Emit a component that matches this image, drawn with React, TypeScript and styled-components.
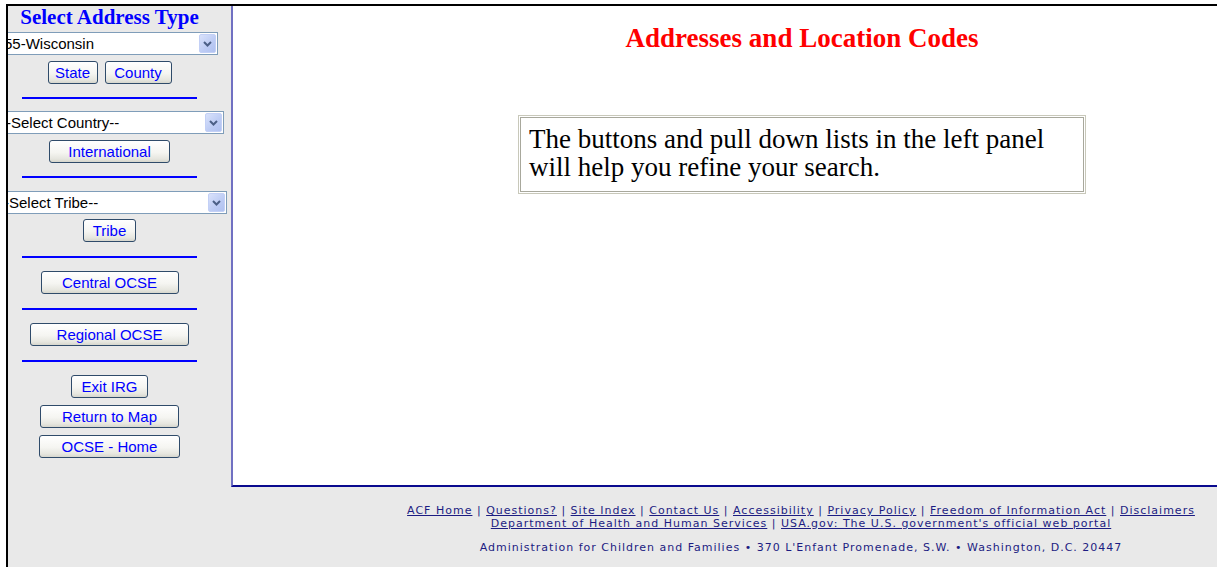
import React from 'react';
import styled, { createGlobalStyle } from 'styled-components';

const GlobalStyle = createGlobalStyle`
  html, body {
    margin: 0;
    padding: 0;
    background: #fff;
    overflow: hidden;
  }
`;

const footerLinks = [
  'ACF Home',
  'Questions?',
  'Site Index',
  'Contact Us',
  'Accessibility',
  'Privacy Policy',
  'Freedom of Information Act',
  'Disclaimers',
];

const Dropdown = ({
  value,
  width,
  shift,
  top,
}: {
  value: string;
  width: number;
  shift: number;
  top: number;
}) => (
  <SelectBox $width={width} $shift={shift} $top={top}>
    <NativeSelect defaultValue={value}>
      <option>{value}</option>
    </NativeSelect>
    <ArrowButton>
      <svg width="9" height="6" viewBox="0 0 9 6">
        <path d="M1 1l3.5 3.5L8 1" fill="none" stroke="#4b5f86" strokeWidth="2" />
      </svg>
    </ArrowButton>
  </SelectBox>
);

const App = () => {
  return (
    <>
      <GlobalStyle />
      <Page>
        <Sidebar>
          <Title>Select Address Type</Title>
          <Dropdown value="55-Wisconsin" width={216} shift={-6} top={4} />
          <ButtonRow $top={6}>
            <PanelButton $width={50}>State</PanelButton>
            <PanelButton $width={67}>County</PanelButton>
          </ButtonRow>
          <Divider $top={13} />
          <Dropdown value="--Select Country--" width={225} shift={-9} top={12} />
          <PanelButton $width={121} $top={6}>
            International
          </PanelButton>
          <Divider $top={13} />
          <Dropdown value="--Select Tribe--" width={230} shift={-11} top={13} />
          <PanelButton $width={53} $top={5}>
            Tribe
          </PanelButton>
          <Divider $top={14} />
          <PanelButton $width={138} $top={13}>
            Central OCSE
          </PanelButton>
          <Divider $top={14} />
          <PanelButton $width={159} $top={13}>
            Regional OCSE
          </PanelButton>
          <Divider $top={14} />
          <PanelButton $width={77} $top={13}>
            Exit IRG
          </PanelButton>
          <PanelButton $width={139} $top={7}>
            Return to Map
          </PanelButton>
          <PanelButton $width={141} $top={7}>
            OCSE - Home
          </PanelButton>
        </Sidebar>
        <Main>
          <Frame>
            <Heading>Addresses and Location Codes</Heading>
            <Note>
              <NoteText>
                The buttons and pull down lists in the left panel will help you
                refine your search.
              </NoteText>
            </Note>
          </Frame>
          <Footer>
            <FooterLine>
              {footerLinks.map((label, i) => (
                <React.Fragment key={label}>
                  {i > 0 && ' | '}
                  <FooterLink href="#">{label}</FooterLink>
                </React.Fragment>
              ))}
            </FooterLine>
            <FooterLine>
              <FooterLink href="#">Department of Health and Human Services</FooterLink>
              {' | '}
              <FooterLink href="#">
                USA.gov: The U.S. government's official web portal
              </FooterLink>
            </FooterLine>
            <Address>
              Administration for Children and Families • 370 L'Enfant Promenade,
              S.W. • Washington, D.C. 20447
            </Address>
          </Footer>
        </Main>
      </Page>
    </>
  );
};

export default App;

const Page = styled.div`
  display: flex;
  height: 563px;
  margin: 4px 0 0 6px;
  border-top: 2px solid #000;
  border-left: 2px solid #000;
  background: #e9e9e9;
  overflow: hidden;
`;

const Sidebar = styled.div`
  display: flex;
  flex-direction: column;
  align-items: center;
  flex: 0 0 223px;
  box-sizing: border-box;
  padding-right: 20px;
  overflow: hidden;
`;

const Title = styled.div`
  font: bold 21px/22px 'Liberation Serif', 'Times New Roman', serif;
  color: #0000ff;
  white-space: nowrap;
`;

const SelectBox = styled.div<{ $width: number; $shift: number; $top: number }>`
  display: flex;
  align-items: center;
  align-self: flex-start;
  flex-shrink: 0;
  box-sizing: border-box;
  width: ${({ $width }) => $width}px;
  height: 23px;
  margin-top: ${({ $top }) => $top}px;
  margin-left: ${({ $shift }) => $shift}px;
  border: 1px solid #7f9db9;
  background: #fff;
`;

const NativeSelect = styled.select`
  flex: 1;
  min-width: 0;
  height: 100%;
  padding: 0 0 0 1px;
  border: none;
  outline: none;
  background: transparent;
  appearance: none;
  font: 15px 'Liberation Sans', Arial, sans-serif;
  color: #000;
`;

const ArrowButton = styled.span`
  display: flex;
  align-items: center;
  justify-content: center;
  flex: 0 0 17px;
  height: 19px;
  margin-right: 1px;
  box-sizing: border-box;
  border: 1px solid #c3d0f6;
  border-radius: 2px;
  background: linear-gradient(135deg, #d9e2fb 0%, #bccbf4 60%, #b0c1f0 100%);
`;

const ButtonRow = styled.div<{ $top: number }>`
  display: flex;
  gap: 7px;
  margin-top: ${({ $top }) => $top}px;
`;

const PanelButton = styled.button<{ $width: number; $top?: number }>`
  flex-shrink: 0;
  box-sizing: border-box;
  width: ${({ $width }) => $width}px;
  height: 23px;
  margin-top: ${({ $top = 0 }) => $top}px;
  padding: 0;
  border: 1px solid #2f4b6a;
  border-radius: 3px;
  background: linear-gradient(#ffffff 0%, #f5f5f1 55%, #e6e6df 85%, #d6d6cd 100%);
  font: 15px 'Liberation Sans', Arial, sans-serif;
  color: #0000ff;
  white-space: nowrap;
  cursor: pointer;
`;

const Divider = styled.div<{ $top: number }>`
  flex-shrink: 0;
  width: 175px;
  height: 2px;
  margin-top: ${({ $top }) => $top}px;
  background: #0000ff;
`;

const Main = styled.div`
  display: flex;
  flex-direction: column;
  flex: 0 0 1140px;
`;

const Frame = styled.div`
  display: flex;
  flex-direction: column;
  align-items: center;
  box-sizing: border-box;
  height: 481px;
  border-left: 2px solid #7070c2;
  border-bottom: 2px solid #0a0a8e;
  background: #fff;
`;

const Heading = styled.h1`
  margin: 17px 0 0;
  font: bold 27px/31px 'Liberation Serif', 'Times New Roman', serif;
  color: #ff0000;
`;

const Note = styled.div`
  box-sizing: border-box;
  width: 568px;
  margin-top: 61px;
  padding: 1px;
  border: 1px solid #c8c8ba;
`;

const NoteText = styled.p`
  margin: 0;
  padding: 7px 8px 10px;
  border: 1px solid #a8a89c;
  font: 27px/28px 'Liberation Serif', 'Times New Roman', serif;
  color: #000;
`;

const Footer = styled.footer`
  padding-top: 17px;
  text-align: center;
  font: 11px/13px 'DejaVu Sans', Verdana, sans-serif;
  letter-spacing: 1px;
  color: #1c1c82;
`;

const FooterLine = styled.div`
  white-space: nowrap;
`;

const FooterLink = styled.a`
  color: #1c1c82;
  text-decoration: underline;
`;

const Address = styled.div`
  margin-top: 11px;
  white-space: nowrap;
`;
